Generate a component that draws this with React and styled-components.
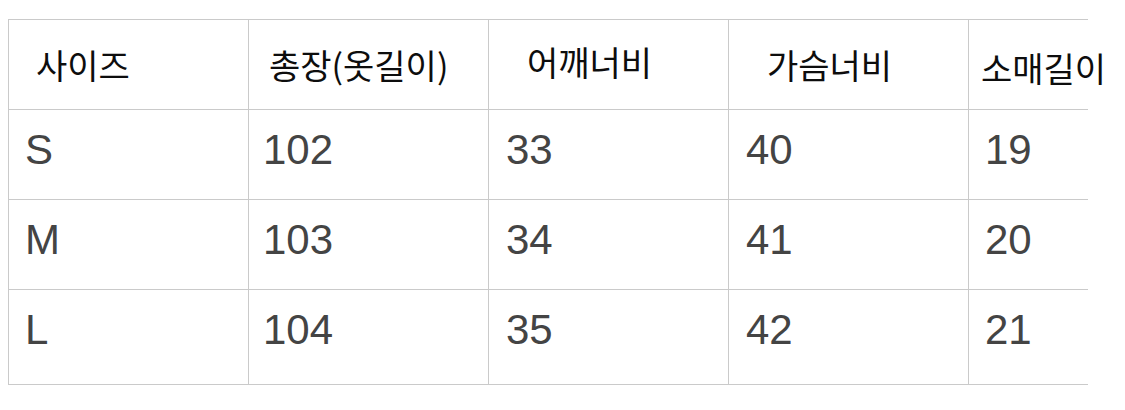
import React from 'react'
import styled, { createGlobalStyle } from 'styled-components'

const GlobalStyle = createGlobalStyle`
  html, body {
    margin: 0;
    background: #ffffff;
  }
  body {
    padding: 19px 0 0 8px;
  }
`

const Table = styled.div`
  display: grid;
  grid-template-columns: 240px 240px 240px 240px 120px;
  grid-template-rows: 90px 90px 90px 95px;
  width: 1080px;
  border-bottom: 1px solid #cacaca;
`

const Cell = styled.div`
  display: flex;
  align-items: center;
  box-sizing: border-box;
  border-top: 1px solid #cacaca;
  border-left: 1px solid #cacaca;
  padding-left: ${p => p.$pad}px;
  padding-bottom: ${p => p.$lift || 0}px;
  white-space: nowrap;
  overflow: visible;
`

const HeadText = styled.span`
  font-family: "Noto Sans CJK KR", "Noto Sans", sans-serif;
  font-size: 34px;
  color: #0d0d0d;
  position: relative;
  top: ${p => p.$shift || 0}px;
`

const DataText = styled.span`
  font-family: "Liberation Sans", Arial, sans-serif;
  font-size: 42px;
  color: #444444;
`

const headers = [
  { label: '사이즈', pad: 27, shift: 0 },
  { label: '총장(옷길이)', pad: 20, shift: 0 },
  { label: '어깨너비', pad: 38, shift: -3 },
  { label: '가슴너비', pad: 38, shift: 0 },
  { label: '소매길이', pad: 12, shift: 3 },
]

const rows = [
  ['S', '102', '33', '40', '19'],
  ['M', '103', '34', '41', '20'],
  ['L', '104', '35', '42', '21'],
]

const dataPads = [16, 14, 17, 17, 16]

function App() {
  return (
    <>
      <GlobalStyle />
      <Table>
        {headers.map(h => (
          <Cell key={h.label} $pad={h.pad}>
            <HeadText $shift={h.shift}>{h.label}</HeadText>
          </Cell>
        ))}
        {rows.map((row, r) =>
          row.map((v, i) => (
            <Cell key={r + '-' + i} $pad={dataPads[i]} $lift={r === 2 ? 14 : 10}>
              <DataText>{v}</DataText>
            </Cell>
          ))
        )}
      </Table>
    </>
  )
}

export default App
